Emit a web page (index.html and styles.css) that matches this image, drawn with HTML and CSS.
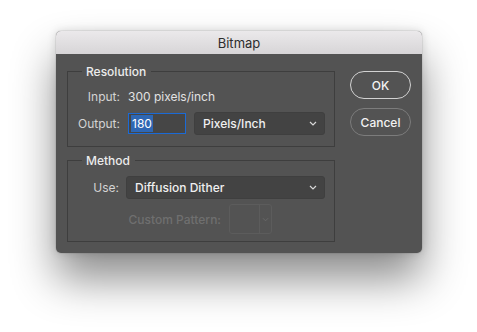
FILE: index.html
```html
<!DOCTYPE html>
<html>
<head>
<meta charset="utf-8">
<link rel="stylesheet" href="styles.css">
</head>
<body>
<div class="stage">
  <div class="window">
    <div class="titlebar">Bitmap</div>
    <div class="content">
      <div class="groups">
        <fieldset class="group group-res">
          <legend>Resolution</legend>
          <div class="row row-input">
            <span class="label lbl-res">Input:</span>
            <span class="value">300 pixels/inch</span>
          </div>
          <div class="row row-output">
            <span class="label lbl-res">Output:</span>
            <span class="textfield"><span class="sel">180</span></span>
            <span class="select sel-units">Pixels/Inch<svg class="chev" viewBox="0 0 8 5" width="8" height="5"><path d="M1 1 L4 4 L7 1" fill="none" stroke="#d8d8d8" stroke-width="1.2"/></svg></span>
          </div>
        </fieldset>
        <fieldset class="group group-method">
          <legend>Method</legend>
          <div class="row row-use">
            <span class="label lbl-use">Use:</span>
            <span class="select sel-use">Diffusion Dither<svg class="chev" viewBox="0 0 8 5" width="8" height="5"><path d="M1 1 L4 4 L7 1" fill="none" stroke="#d8d8d8" stroke-width="1.2"/></svg></span>
          </div>
          <div class="row row-custom">
            <span class="label lbl-custom disabled">Custom Pattern:</span>
            <span class="pattern"><span class="swatch"></span><span class="pat-arrow"><svg viewBox="0 0 8 5" width="7" height="5"><path d="M1 1 L4 4 L7 1" fill="none" stroke="#6c6c6c" stroke-width="1"/></svg></span></span>
          </div>
        </fieldset>
      </div>
      <div class="buttons">
        <button class="btn btn-ok">OK</button>
        <button class="btn btn-cancel">Cancel</button>
      </div>
    </div>
  </div>
</div>
</body>
</html>
```
FILE: styles.css
```css
html, body {
  margin: 0;
  padding: 0;
  background: #ffffff;
}
body {
  font-family: Inter, "Liberation Sans", sans-serif;
  font-size: 12px;
}
.stage {
  box-sizing: border-box;
  height: 332px;
  padding: 31px 0 0 56px;
  overflow: hidden;
}
.window {
  width: 366px;
  border-radius: 5px;
  background: #535353;
  box-shadow: 0 0 0 1px rgba(0,0,0,0.06), 0 0 10px rgba(0,0,0,0.14), 0 26px 44px rgba(0,0,0,0.45);
}
.titlebar {
  height: 23px;
  line-height: 24px;
  text-align: center;
  font-size: 13px;
  color: #2d2d2d;
  background: linear-gradient(#ebe9eb, #d7d5d7);
  border-radius: 5px 5px 0 0;
}
.content {
  display: flex;
  padding: 10px 11px 11px 11px;
  gap: 15px;
  border-radius: 0 0 5px 5px;
}
.groups {
  display: flex;
  flex-direction: column;
  gap: 6px;
  width: 268px;
}
.group {
  margin: 0;
  border: 1px solid #3e3e3e;
  padding: 0;
  min-width: 0;
}
.group legend {
  margin-left: 14px;
  padding: 1px 5px 0 4px;
  line-height: 14px;
  color: #ececec;
  font-weight: 500;
}
.group-res {
  padding: 7px 0 11px 0;
  display: flex;
  flex-direction: column;
  gap: 6px;
}
.group-method {
  padding: 8px 0 7px 0;
  display: flex;
  flex-direction: column;
  gap: 5px;
}
.row {
  display: flex;
  align-items: center;
}
.label {
  text-align: right;
  color: #d4d4d4;
  flex: none;
}
.lbl-res {
  width: 52px;
  margin-right: 8px;
}
.row-input {
  height: 20px;
}
.value {
  color: #e2e2e2;
}
.textfield {
  box-sizing: border-box;
  width: 58px;
  height: 21px;
  border: 1px solid #1b6ad6;
  background: #464646;
  display: flex;
  align-items: center;
  padding-left: 2px;
  margin-right: 8px;
}
.sel {
  background: #2f67b3;
  color: #ffffff;
  line-height: 17px;
  padding: 0 1px;
}
.select {
  box-sizing: border-box;
  height: 23px;
  border: 1px solid #3f3f3f;
  border-radius: 3px;
  background: #434343;
  color: #f0f0f0;
  display: flex;
  align-items: center;
  justify-content: space-between;
  padding: 0 7px 0 8px;
  font-weight: 500;
}
.sel-units {
  width: 131px;
}
.lbl-use {
  width: 51px;
  margin-right: 7px;
}
.sel-use {
  width: 199px;
}
.row-custom {
  height: 30px;
}
.lbl-custom {
  width: 153px;
  margin-right: 8px;
}
.disabled {
  color: #6f6f6f;
  font-weight: 500;
}
.pattern {
  box-sizing: border-box;
  width: 43px;
  height: 30px;
  border: 1px solid #5c5c5c;
  border-radius: 3px;
  display: flex;
}
.swatch {
  width: 29px;
  border-right: 1px solid #5c5c5c;
}
.pat-arrow {
  flex: 1;
  display: flex;
  align-items: center;
  justify-content: center;
}
.buttons {
  display: flex;
  flex-direction: column;
  padding-top: 7px;
  gap: 9px;
}
.btn {
  box-sizing: border-box;
  width: 61px;
  height: 28px;
  border-radius: 14px;
  background: transparent;
  font-family: inherit;
  font-size: 12px;
  font-weight: 500;
  color: #f2f2f2;
  padding: 0;
}
.btn-ok {
  border: 1px solid #d2d2d2;
}
.btn-cancel {
  border: 1px solid #7c7c7c;
}
```
